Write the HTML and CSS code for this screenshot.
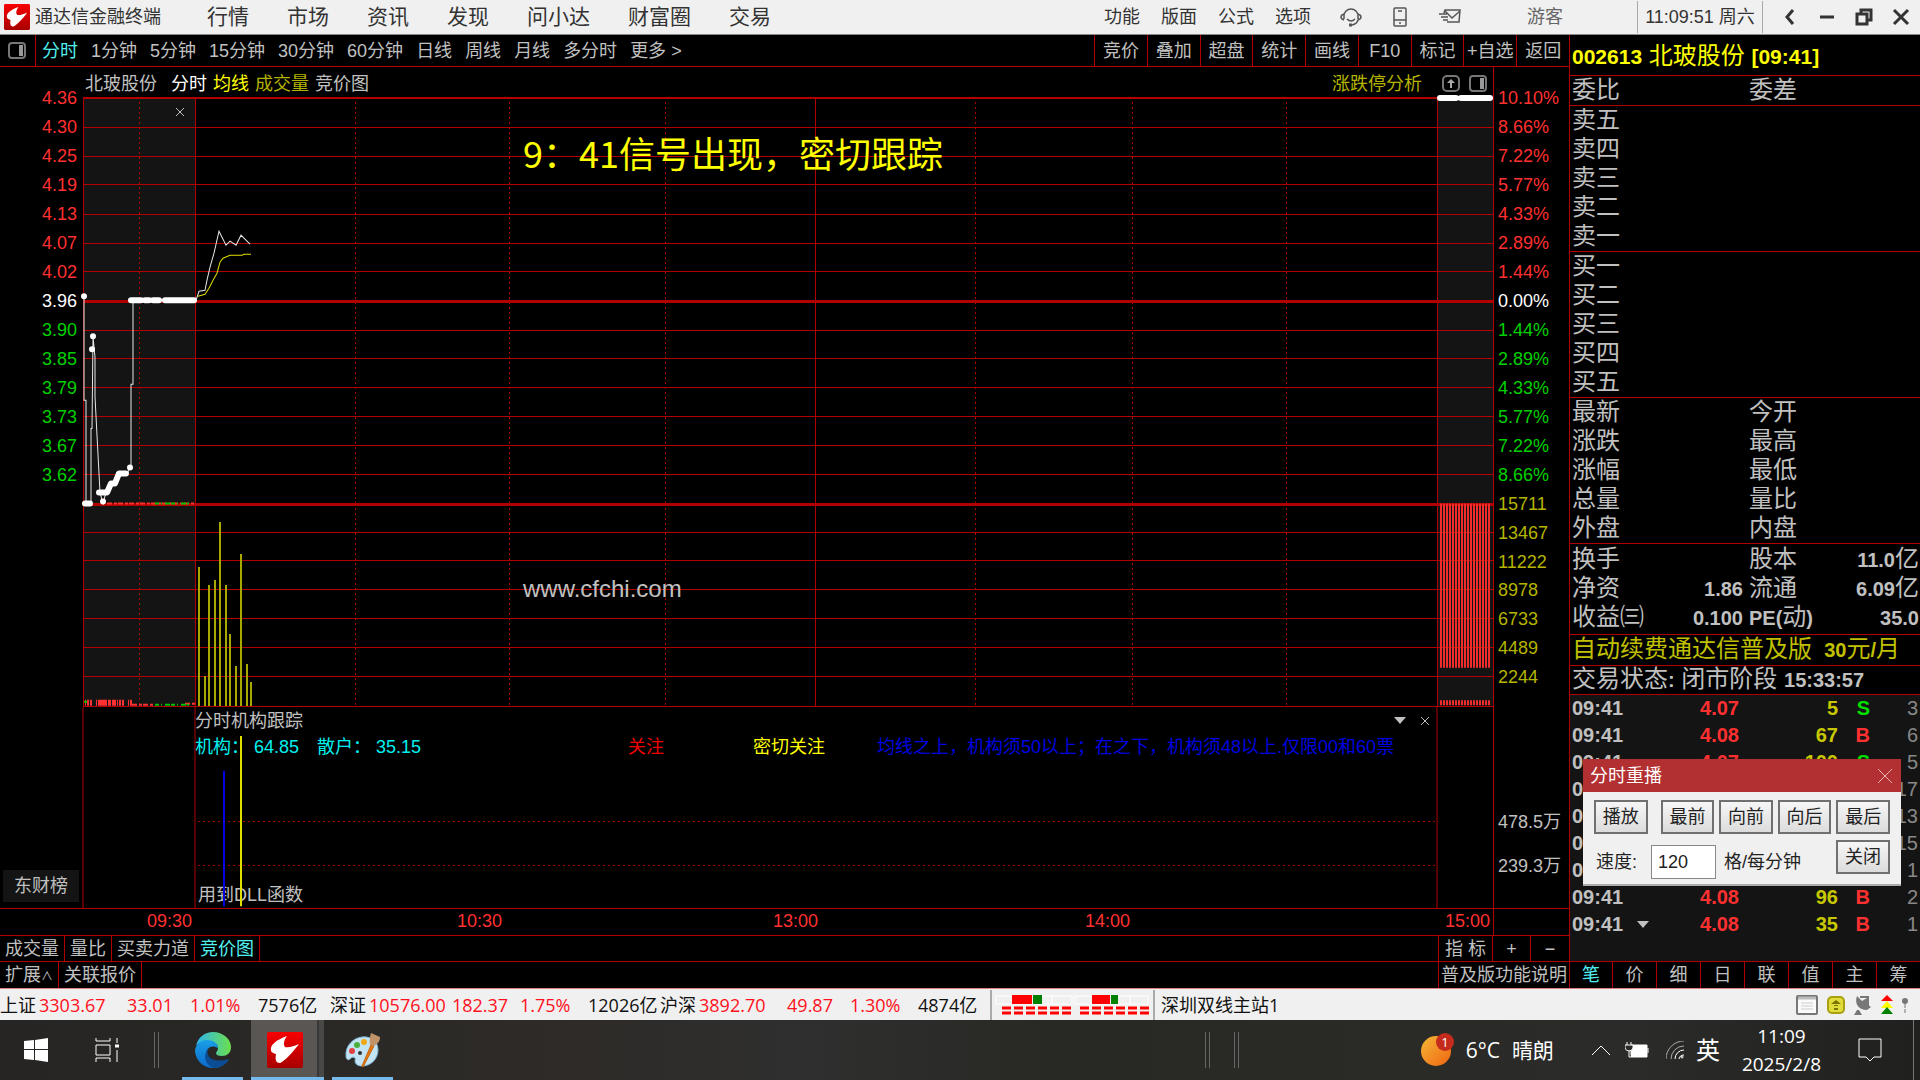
FILE: index.html
```html
<!DOCTYPE html>
<html lang="zh-CN">
<head>
  <meta charset="UTF-8">
  <title>通达信金融终端</title>
  <link rel="stylesheet" href="styles.css">
</head>
<body>

  <header class="titlebar">
    <svg class="logo" viewBox="0 0 36 36"><use href="#tdx"/></svg>
    <span class="app-name">通达信金融终端</span>
    <nav class="main-menu">
      <a href="#">行情</a><a href="#">市场</a><a href="#">资讯</a><a href="#">发现</a><a href="#">问小达</a><a href="#">财富圈</a><a href="#">交易</a>
    </nav>
    <nav class="tool-menu">
      <a href="#">功能</a><a href="#">版面</a><a href="#">公式</a><a href="#">选项</a>
    </nav>
    <div class="title-icons">
      <svg width="22" height="20" viewBox="0 0 22 20" fill="none" stroke="#555" stroke-width="1.5"><path d="M4 12V9a7 7 0 0 1 14 0v3M4 7q-3 1-3 3t3 3M18 7q3 1 3 3t-3 3q-1 4-6 5"/><path d="M7 12q4 4 8 0"/><path d="M9 18h3" stroke-width="3"/></svg>
      <svg width="14" height="20" viewBox="0 0 14 20" fill="none" stroke="#555" stroke-width="1.5"><rect x="1" y="1" width="12" height="18" rx="1"/><path d="M1 13h12M5 4h4M6 16h2"/></svg>
      <svg width="24" height="18" viewBox="0 0 24 18" fill="none" stroke="#555" stroke-width="1.5"><path d="M6 5l1-3h15l-1 12H9M7 3l7 7 8-7M1 6h8M3 9h7M5 12h5"/></svg>
    </div>
    <a class="guest" href="#">游客</a>
    <span class="clock">11:09:51 周六</span>
    <div class="window-btns">
      <button aria-label="后退"><svg width="18" height="18" viewBox="0 0 18 18"><path d="M12 2L6 9l6 7"/></svg></button>
      <button aria-label="最小化"><svg width="18" height="18" viewBox="0 0 18 18"><path d="M2 9h14"/></svg></button>
      <button aria-label="还原"><svg width="18" height="18" viewBox="0 0 18 18"><path d="M2 6h10v10H2zM6 6V2h10v10h-4"/></svg></button>
      <button aria-label="关闭窗口"><svg width="18" height="18" viewBox="0 0 18 18"><path d="M2 2l14 14M16 2L2 16"/></svg></button>
    </div>
  </header>

  <div class="workspace">
    <main class="chart-side">

      <div class="period-bar">
        <button class="panel-toggle" aria-label="侧栏"><svg width="18" height="17" viewBox="0 0 18 17"><use href="#panel"/></svg></button>
        <nav class="periods">
          <a class="active" href="#">分时</a><a href="#">1分钟</a><a href="#">5分钟</a><a href="#">15分钟</a><a href="#">30分钟</a><a href="#">60分钟</a><a href="#">日线</a><a href="#">周线</a><a href="#">月线</a><a href="#">多分时</a><a href="#">更多 &gt;</a>
        </nav>
        <div class="actions">
          <button>竞价</button><button>叠加</button><button>超盘</button><button>统计</button><button>画线</button><button>F10</button><button>标记</button><button>+自选</button><button>返回</button>
        </div>
      </div>

      <div class="chart">
        <div class="chart-head">
          <span class="stock">北玻股份</span>
          <span class="white">分时</span>
          <span class="yellow">均线</span>
          <span class="olive">成交量</span>
          <span>竞价图</span>
          <a class="limit olive" href="#">涨跌停分析</a>
          <svg width="18" height="17" viewBox="0 0 18 17"><rect x="1" y="1" width="16" height="15" rx="4" fill="none" stroke="#777" stroke-width="2"/><path d="M9 4l4 4h-3v5H8V8H5z" fill="#aaa"/></svg>
          <svg width="18" height="17" viewBox="0 0 18 17"><use href="#panel"/></svg>
        </div>

        <div class="axis price-axis">
          <span>4.36</span><span>4.30</span><span>4.25</span><span>4.19</span><span>4.13</span><span>4.07</span><span>4.02</span>
          <span class="white">3.96</span>
          <span class="green">3.90</span><span class="green">3.85</span><span class="green">3.79</span><span class="green">3.73</span><span class="green">3.67</span><span class="green">3.62</span>
        </div>

        <div class="plot">
          <svg viewBox="0 0 1410 607" preserveAspectRatio="none">
            <path class="shade" d="M0 0H112V607H0zM1354 0h56V607h-56z"/>
            <!-- grid -->
            <path class="grid" d="M0 0H1410M0 29H1410M0 58H1410M0 86H1410M0 116H1410M0 145H1410M0 173H1410M0 232H1410M0 260H1410M0 289H1410M0 318H1410M0 347H1410M0 376H1410M0 434H1410M0 462H1410M0 491H1410M0 520H1410M0 549H1410M0 578H1410M0 0V607M112 0V607M732 0V607M1354 0V607"/>
            <path class="grid thick" d="M0 203H1410M0 406H1410"/>
            <path class="grid dots" d="M56 4V607M272 4V607M426 4V607M582 4V607M892 4V607M1049 4V607M1203 4V607"/>
            <!-- call auction volume -->
            <path d="M2 604H49" stroke="#ff3030" stroke-width="6" stroke-dasharray="1 1 2 1 2 4 1 1 9 1 3 1 4 1"/>
            <path d="M49 606H70M102 605H112M24 405H112" stroke="#ff3030" stroke-width="2" stroke-dasharray="5 2 3 1"/>
            <path d="M72 606H106M72 405H106M1 405h4M1 603h3" stroke="#00c000" stroke-width="2" stroke-dasharray="4 2 1 3 5 1"/>
            <path d="M1357 487H1408" stroke="#f02c2c" stroke-width="164" stroke-dasharray="2 1"/>
            <path d="M1357 604H1408" stroke="#f02c2c" stroke-width="5" stroke-dasharray="2 1"/>
            <!-- volume -->
            <path class="vol" d="M116 468V607M122 577V607M126 486V607M132 481V607M137 423V607M143 486V607M147 535V607M153 567V607M158 455V607M164 565V607M168 583V607"/>
            <!-- price and average -->
            <path class="line" d="M1 198V302H3V404H8V330H9L10 238L12 259V298L14 337L16 375L17 394L20 405L23 394L27 385L32 385L36 375H44L47 369L48 367V286H50V202H113L116 193L122 192L124 182L127 169L131 155L136 133L143 147L147 143L153 147L158 137L167 146"/>
            <path class="line avg" d="M115 198L122 196L126 190L130 182L134 175L137 164L140 160L147 157H159L161 156H168"/>
            <path class="points" d="M1 198h0M9 251h0M10 238h0M2 405H7M16 394H24L28 385H32L36 375H43M47 369h0M20 403h0M48 202H58M62 202H66M70 202H76M82 202H111M1357 0H1373M1378 0H1407"/>
          </svg>
          <button class="close-auction" aria-label="关闭竞价"><svg width="10" height="10" viewBox="0 0 10 10"><use href="#cross"/></svg></button>
          <p class="note">9：41信号出现，密切跟踪</p>
          <p class="watermark">www.cfchi.com</p>
        </div>

        <div class="axis percent-axis">
          <span>10.10%</span><span>8.66%</span><span>7.22%</span><span>5.77%</span><span>4.33%</span><span>2.89%</span><span>1.44%</span>
          <span class="white">0.00%</span>
          <span class="green">1.44%</span><span class="green">2.89%</span><span class="green">4.33%</span><span class="green">5.77%</span><span class="green">7.22%</span><span class="green">8.66%</span>
          <span class="olive">15711</span><span class="olive">13467</span><span class="olive">11222</span><span class="olive">8978</span><span class="olive">6733</span><span class="olive">4489</span><span class="olive">2244</span>
        </div>

        <div class="rank"><button>东财榜</button></div>

        <div class="indicator">
          <svg viewBox="0 0 1410 202" preserveAspectRatio="none">
            <path class="grid" d="M0 0V202M112 0V202M1354 0V202"/>
            <path class="grid dots" d="M115 115H1354M115 159H1354"/>
          </svg>
          <div class="indicator-text">
            <div class="ind-title">
              <span>分时机构跟踪</span>
              <button aria-label="展开"><svg width="12" height="7" viewBox="0 0 12 7"><path d="M0 0h12L6 7z" fill="#c0c0c0"/></svg></button>
              <button aria-label="关闭指标"><svg width="10" height="10" viewBox="0 0 10 10"><use href="#cross"/></svg></button>
            </div>
            <div class="ind-values">
              <span>机构：</span><span>64.85</span><span>散户：</span><span>35.15</span>
              <span class="pure-red">关注</span><span class="yellow">密切关注</span>
              <span class="blue">均线之上，机构须50以上；在之下，机构须48以上.仅限00和60票</span>
            </div>
            <div class="ind-foot">用到DLL函数</div>
          </div>
          <svg class="signals" viewBox="0 0 1410 202" preserveAspectRatio="none">
            <path d="M141 64V200" stroke="#0000e0" stroke-width="2"/>
            <path d="M158 29V200" stroke="#e0e000" stroke-width="2"/>
          </svg>
        </div>

        <div class="flow-axis"><span>478.5万</span><span>239.3万</span></div>

        <div class="time-axis"><span>09:30</span><span>10:30</span><span>13:00</span><span>14:00</span><span>15:00</span></div>
        <div class="time-end"></div>
      </div>

      <div class="tab-row">
        <button>成交量</button><button>量比</button><button>买卖力道</button><button class="active">竞价图</button>
        <div class="tab-right"><button class="w-a">指 标</button><button class="w-b">+</button><button class="w-b">−</button></div>
      </div>
      <div class="tab-row">
        <button>扩展<small>∧</small></button><button>关联报价</button>
        <div class="tab-right"><button class="w-all">普及版功能说明</button></div>
      </div>
    </main>

    <aside class="quote-side">
      <h1><b>002613</b> 北玻股份 <b>[09:41]</b></h1>
      <div class="pairs"><span>委比</span><span></span><span>委差</span><span></span></div>
      <div class="pairs">
        <span>卖五</span><span></span><span></span><span></span>
        <span>卖四</span><span></span><span></span><span></span>
        <span>卖三</span><span></span><span></span><span></span>
        <span>卖二</span><span></span><span></span><span></span>
        <span>卖一</span><span></span><span></span><span></span>
      </div>
      <div class="pairs">
        <span>买一</span><span></span><span></span><span></span>
        <span>买二</span><span></span><span></span><span></span>
        <span>买三</span><span></span><span></span><span></span>
        <span>买四</span><span></span><span></span><span></span>
        <span>买五</span><span></span><span></span><span></span>
      </div>
      <div class="pairs">
        <span>最新</span><span></span><span>今开</span><span></span>
        <span>涨跌</span><span></span><span>最高</span><span></span>
        <span>涨幅</span><span></span><span>最低</span><span></span>
        <span>总量</span><span></span><span>量比</span><span></span>
        <span>外盘</span><span></span><span>内盘</span><span></span>
      </div>
      <div class="pairs roomy">
        <span>换手</span><span></span><span>股本</span><span><b>11.0</b>亿</span>
        <span>净资</span><span><b>1.86</b></span><span>流通</span><span><b>6.09</b>亿</span>
        <span>收益㈢</span><span><b>0.100</b></span><span><b>PE(</b>动<b>)</b></span><span><b>35.0</b></span>
      </div>
      <a class="renew" href="#"><span>自动续费通达信普及版</span><span><b>30</b>元<b>/</b>月</span></a>
      <div class="state">交易状态<b>:</b> 闭市阶段 <b>15:33:57</b></div>

      <div class="ticks">
        <table>
          <tr><td>09:41</td><td>4.07</td><td>5</td><td class="sell">S</td><td>3</td></tr>
          <tr><td>09:41</td><td>4.08</td><td>67</td><td>B</td><td>6</td></tr>
          <tr><td>09:41</td><td>4.07</td><td>100</td><td class="sell">S</td><td>5</td></tr>
          <tr><td>09:41</td><td>4.07</td><td>210</td><td>B</td><td>17</td></tr>
          <tr><td>09:41</td><td>4.08</td><td>85</td><td>B</td><td>13</td></tr>
          <tr><td>09:41</td><td>4.07</td><td>140</td><td class="sell">S</td><td>15</td></tr>
          <tr><td>09:41</td><td>4.08</td><td>20</td><td>B</td><td>1</td></tr>
          <tr><td>09:41</td><td>4.08</td><td>96</td><td>B</td><td>2</td></tr>
          <tr><td>09:41 <svg width="12" height="7" viewBox="0 0 12 7"><path d="M0 0h12L6 7z" fill="#c0c0c0"/></svg></td><td>4.08</td><td>35</td><td>B</td><td>1</td></tr>
        </table>

        <form class="replay">
          <div class="replay-title">分时重播
            <button type="button" aria-label="关闭对话框"><svg width="14" height="14" viewBox="0 0 14 14"><path d="M0 0l14 14M14 0L0 14" stroke="#e8b4b4"/></svg></button>
          </div>
          <div class="replay-row">
            <button type="button" class="play">播放</button><button type="button">最前</button><button type="button">向前</button><button type="button">向后</button><button type="button">最后</button>
          </div>
          <div class="replay-row speed">
            <label for="speed">速度:</label>
            <input id="speed" type="text" value="120">
            <span>格/每分钟</span>
            <button type="button">关闭</button>
          </div>
        </form>
      </div>

      <div class="quote-tabs">
        <button class="active">笔</button><button>价</button><button>细</button><button>日</button><button>联</button><button>值</button><button>主</button><button>筹</button>
      </div>
    </aside>
  </div>

  <div class="statusbar">
    <div class="index"><span>上证</span><span>3303.67</span><span>33.01</span><span>1.01%</span><span>7576亿</span></div>
    <div class="index"><span>深证</span><span>10576.00</span><span>182.37</span><span>1.75%</span><span>12026亿</span></div>
    <div class="index"><span>沪深</span><span>3892.70</span><span>49.87</span><span>1.30%</span><span>4874亿</span></div>
    <div class="heat">
      <svg width="154" height="22" viewBox="0 0 154 22">
        <path d="M1 2h76v8H1zM80 2h73v8H80zM57 2v8M135 2v8" fill="none" stroke="#fff"/>
        <path d="M17 1h20v9H17zM97 1h18v9H97z" fill="#f00"/>
        <path d="M38 1h9v9H38zM116 1h7v9H116z" fill="#008000"/>
        <path d="M7 14H76M7 19H76M85 14H154M85 19H154" stroke="#f00" stroke-width="3" stroke-dasharray="9 3"/>
      </svg>
    </div>
    <span class="host">深圳双线主站1</span>
    <div class="status-icons">
      <svg width="22" height="20" viewBox="0 0 22 20"><rect x="1" y="1" width="20" height="18" rx="1" fill="#fafafa" stroke="#777" stroke-width="2"/><path d="M2 3h18" stroke="#bbb" stroke-width="3"/><path d="M5 8h12M5 11h12M5 14h12" stroke="#ccc"/></svg>
      <svg width="18" height="18" viewBox="0 0 18 18"><rect x="1" y="1" width="16" height="16" rx="4" fill="#e0dc3c" stroke="#a8a010" stroke-width="2"/><path d="M9 4l5 4H4zM7 9h4v1H7zM7 12h4v2H7z" fill="#7a7400"/></svg>
      <svg width="18" height="20" viewBox="0 0 18 20" fill="#777"><path d="M3 1C0 9 5 15 13 15l4-3-4-3V3L8 6zM0 20l3-5h2l3 5z"/><path d="M6 2h8v9" fill="none" stroke="#777" stroke-width="2"/></svg>
      <svg width="12" height="20" viewBox="0 0 12 20"><path d="M6 0l6 6H0z" fill="#f00"/><path d="M6 6l6 7H0z" fill="#ff0"/><path d="M6 12l6 7H0z" fill="#008000"/></svg>
      <svg width="6" height="16" viewBox="0 0 6 16"><circle cx="3" cy="4" r="3" fill="#777"/><path d="M3 6v10" stroke="#777" stroke-dasharray="5 1"/></svg>
    </div>
  </div>

  <footer class="taskbar">
    <button class="task start" aria-label="开始"><svg width="24" height="24" viewBox="0 0 24 24" fill="#fff"><path d="M0 3l10-1v9H0zM11 2l13-2v11H11zM0 12h10v10L0 21zM11 12h13v12l-13-2z"/></svg></button>
    <button class="task view" aria-label="任务视图"><svg width="26" height="24" viewBox="0 0 26 24" fill="none" stroke="#fff"><path d="M1 0v3h14V0M1 24v-4h14v4M1 7h14v10H1zM22 0v5M22 12v12"/><path d="M20 8h4" stroke-width="3"/></svg></button>
    <i class="grip"></i>
    <button class="task open edge" aria-label="Edge">
      <svg width="36" height="36" viewBox="0 0 36 36">
        <defs>
          <linearGradient id="e1" x1="0" x2="1"><stop offset="0" stop-color="#2fb4ee"/><stop offset="1" stop-color="#6be04c"/></linearGradient>
          <linearGradient id="e2" x1="0" x2="0" y1="0" y2="1"><stop offset="0" stop-color="#1ba0e8"/><stop offset="1" stop-color="#0b68c8"/></linearGradient>
        </defs>
        <path d="M1 14C3 5 10 0 18 0c10 0 18 7 18 15 0 6-4 9-9 9-4 0-6-1-6-3 0-1 2-2 2-5 0-4-4-7-9-7C7 9 2 12 1 14z" fill="url(#e1)"/>
        <path d="M0 18C1 12 6 8 12 8c7 0 11 4 11 8-6-4-12 0-12 6 0 7 6 12 14 13-3 1-5 1-7 1C8 36 0 28 0 18z" fill="url(#e2)"/>
        <path d="M14 16c-5 8 4 16 19 11 1 0 1 1 0 2-4 5-9 7-14 7-9-3-12-13-5-20z" fill="#0c4c94"/>
      </svg>
    </button>
    <button class="task open current" aria-label="通达信">
      <svg width="36" height="36" viewBox="0 0 36 36">
        <defs>
          <linearGradient id="r1" x1="0" x2="0" y1="0" y2="1"><stop offset="0" stop-color="#f80000"/><stop offset="1" stop-color="#a80000"/></linearGradient>
          <g id="tdx"><rect width="36" height="36" rx="2" fill="url(#r1)"/><path d="M20 4C9 8 3 13 4 18c0 3 3 3 5 4-1 6 0 9 4 9 5-2 13-11 19-19-5 2-10 4-14 3-2-3-1-7 2-11z" fill="#fff"/></g>
          <g id="panel"><rect x="1" y="1" width="16" height="15" rx="3" fill="none" stroke="#777" stroke-width="2"/><path d="M11 3h4v11h-4z" fill="#999"/></g>
          <path id="cross" d="M1 1l8 8M9 1L1 9" stroke="#c0c0c0" fill="none"/>
        </defs>
        <use href="#tdx"/>
      </svg>
    </button>
    <button class="task open paint" aria-label="画图">
      <svg width="36" height="36" viewBox="0 0 36 36">
        <path d="M17 5C8 6 0 14 1 24c0 4 3 5 5 2 3-2 5 0 4 3 0 3 3 5 7 5 9 0 16-7 16-16C33 9 26 4 17 5z" fill="#c3e4f4" stroke="#7fb4d0"/>
        <circle cx="7" cy="19" r="3" fill="#e04040"/><circle cx="12" cy="13" r="3" fill="#48b040"/><circle cx="19" cy="10" r="3" fill="#f0a818"/><circle cx="15" cy="21" r="2" fill="#333"/>
        <path d="M26 13l-9 21 1 1 11-21z" fill="#e07818" stroke="#c86408"/><path d="M26 1l9 4c0 5-3 7-6 9l-4-1c-1-4 0-8 1-12z" fill="#c09468"/>
      </svg>
    </button>
    <div class="grips"><i class="grip"></i><i class="grip"></i></div>
    <div class="tray">
      <svg class="weather" width="34" height="34" viewBox="0 0 34 34">
        <defs><linearGradient id="sun" x1="0" x2="1" y1="0" y2="1"><stop offset="0" stop-color="#f4b838"/><stop offset="1" stop-color="#f06410"/></linearGradient></defs>
        <circle cx="15" cy="18" r="15" fill="url(#sun)"/><circle cx="24" cy="9" r="9" fill="#c42b1c"/>
        <text x="24" y="14" text-anchor="middle" font-size="13" fill="#fff">1</text>
      </svg>
      <span class="temp">6°C</span><span class="sky">晴朗</span>
      <svg class="up" width="18" height="10" viewBox="0 0 18 10" fill="none" stroke="#fff"><path d="M0 10l9-9 9 9"/></svg>
      <svg class="battery" width="24" height="16" viewBox="0 0 24 16"><path d="M6 3h16v12H6zM23 6v5" fill="#fff" stroke="#fff"/><path d="M2 0v3M6 0v3M0 3h8v3q-1 3-4 3t-4-3zM4 9v6h2" fill="#2b2b29" stroke="#fff"/></svg>
      <svg class="wifi" width="18" height="18" viewBox="0 0 18 18" fill="none" stroke="#fff"><path d="M0 18A18 18 0 0 1 18 0M5 18A13 13 0 0 1 18 5" stroke="#aaa"/><path d="M9 18a9 9 0 0 1 9-9M13 18a5 5 0 0 1 5-4"/><circle cx="16" cy="16" r="1"/></svg>
      <span class="ime">英</span>
      <div class="date"><span>11:09</span><span>2025/2/8</span></div>
      <svg class="notice" width="24" height="24" viewBox="0 0 24 24" fill="none" stroke="#fff"><path d="M1 1h22v18h-7l-4 4-4-4H1z"/></svg>
    </div>
  </footer>

</body>
</html>
```
FILE: styles.css
```css
* {
  box-sizing: border-box;
}

body {
  margin: 0;
  min-height: 100vh;
  display: flex;
  flex-direction: column;
  background: #000;
  color: #c0c0c0;
  font-family: "Liberation Sans", "Noto Sans CJK SC", sans-serif;
  font-size: 18px;
  line-height: 26px;
}

a {
  color: inherit;
  text-decoration: none;
}

button {
  font: inherit;
  color: inherit;
  background: none;
  border: none;
  padding: 0;
  white-space: nowrap;
}

p {
  margin: 0;
}

svg {
  display: block;
  flex-shrink: 0;
}

.white { color: #fff; }
.yellow { color: #ffff00; }
.olive { color: #b4b400; }
.green { color: #00d000; }
.blue { color: #0000e0; }
.pure-red { color: #f00000; }
.active { color: #50f0f0; }

/* title bar */
.titlebar {
  display: flex;
  align-items: center;
  height: 35px;
  padding-left: 4px;
  background: #f0f0f0;
  border-bottom: 1px solid #888;
  color: #333;
  white-space: nowrap;
}

.logo {
  width: 26px;
  height: 26px;
  margin-right: 5px;
}

.main-menu {
  display: flex;
  gap: 38px;
  margin-left: 46px;
  font-size: 21px;
}

.tool-menu {
  display: flex;
  gap: 21px;
  margin-left: auto;
}

.title-icons {
  display: flex;
  align-items: center;
  gap: 31px;
  margin-left: 29px;
}

.guest {
  margin-left: 65px;
  color: #666;
}

.clock {
  margin-left: 74px;
  width: 126px;
  line-height: 32px;
  text-align: center;
  border-left: 1px solid #aaa;
  border-right: 1px solid #aaa;
}

.window-btns {
  display: flex;
  gap: 19px;
  padding: 0 10px 0 18px;
}

.window-btns path {
  fill: none;
  stroke: #333;
  stroke-width: 3;
}

/* work area */
.workspace {
  flex: 1;
  display: flex;
}

.chart-side {
  flex: 1;
  min-width: 0;
  display: flex;
  flex-direction: column;
}

.period-bar {
  display: flex;
  height: 32px;
  border-bottom: 1px solid #b00000;
  line-height: 33px;
}

.panel-toggle {
  width: 36px;
  padding-left: 8px;
  border-right: 1px solid #b00000;
}

.periods {
  display: flex;
  gap: 13px;
  margin-left: 6px;
  white-space: nowrap;
}

.actions {
  display: flex;
  width: 475px;
  margin-left: auto;
}

.actions button {
  flex: 1;
  border-left: 1px solid #b00000;
}

/* chart */
.chart {
  flex: 1;
  display: grid;
  grid-template-columns: 83px 1fr 76px;
  grid-template-rows: 31px 607fr 202fr 27px;
}

.chart-head {
  grid-column: 1 / 3;
  display: flex;
  align-items: center;
  gap: 6px;
  padding: 2px 6px 0 85px;
}

.chart-head .stock {
  margin-right: 8px;
}

.chart-head .limit {
  margin-left: auto;
  margin-right: 14px;
}

.chart-head svg + svg {
  margin-left: 3px;
}

.axis {
  display: grid;
  grid-template-rows: repeat(21, 1fr);
  align-items: center;
  margin-top: -14px;
  margin-bottom: 14px;
  color: #ff3030;
}

.axis .white { color: #fff; }
.axis .green { color: #00d000; }
.axis .olive { color: #b4b400; }

.price-axis {
  grid-column: 1;
  padding-right: 6px;
  text-align: right;
}

.percent-axis {
  grid-column: 3;
  grid-row: 1 / 3;
  margin: 0;
  padding: 17px 0 14px 4px;
  border-left: 1px solid #b00000;
}

.plot,
.indicator {
  position: relative;
  grid-column: 2;
  min-height: 0;
}

.plot > svg,
.indicator > svg {
  position: absolute;
  inset: 0;
  width: 100%;
  height: 100%;
  overflow: visible;
}

.shade {
  fill: #141414;
}

.grid {
  fill: none;
  stroke: #b00000;
  shape-rendering: crispEdges;
}

.thick {
  stroke-width: 3;
}

.dots {
  stroke-dasharray: 2 3;
}

.vol {
  stroke: #a8a800;
  stroke-width: 2;
  shape-rendering: crispEdges;
}

.line {
  fill: none;
  stroke: #e8e8e8;
  stroke-width: 1;
}

.avg {
  stroke: #e0e000;
}

.points {
  fill: none;
  stroke: #fff;
  stroke-width: 6;
  stroke-linecap: round;
  stroke-linejoin: round;
}

.close-auction {
  position: absolute;
  left: 92px;
  top: 9px;
}

.note,
.watermark {
  position: absolute;
  left: 440px;
}

.note {
  top: 34px;
  color: #ffff00;
  font-family: "Noto Sans CJK SC", sans-serif;
  font-size: 36px;
  line-height: 40px;
}

.watermark {
  top: 478px;
  font-size: 24px;
}

.rank {
  display: flex;
  align-items: flex-end;
  padding: 0 3px 6px;
}

.rank button {
  width: 76px;
  height: 32px;
  background: #141414;
}

.indicator {
  border-top: 1px solid #b00000;
}

.indicator-text {
  display: flex;
  flex-direction: column;
  height: 100%;
  padding: 1px 63px 0 112px;
  white-space: nowrap;
}

.ind-title {
  display: flex;
  align-items: center;
  gap: 14px;
}

.ind-title span {
  margin-right: auto;
}

.ind-values {
  display: flex;
  color: #00f0f0;
}

.ind-values span:nth-child(1),
.ind-values span:nth-child(3) {
  width: 59px;
}

.ind-values span:nth-child(2) {
  width: 63px;
}

.ind-values .pure-red {
  margin-left: 207px;
  color: #f00000;
}

.ind-values .yellow {
  margin-left: 89px;
  color: #ffff00;
}

.ind-values .blue {
  margin-left: 52px;
  color: #0000e0;
}

.ind-foot {
  margin-top: auto;
  padding-left: 3px;
}

.flow-axis {
  grid-column: 3;
  display: flex;
  flex-direction: column;
  justify-content: flex-end;
  gap: 18px;
  padding: 0 0 29px 4px;
  border-left: 1px solid #b00000;
}

.time-axis {
  grid-column: 1 / 3;
  display: grid;
  grid-template-columns: 310fr 316fr 312fr 360fr 48px;
  padding-left: 147px;
  border-top: 1px solid #b00000;
  line-height: 24px;
  color: #ff3030;
}

.time-end {
  border-top: 1px solid #b00000;
  border-left: 1px solid #b00000;
}

.tab-row {
  display: flex;
  height: 26px;
  border-top: 1px solid #b00000;
}

.tab-row + .tab-row {
  height: 27px;
}

.tab-row button {
  padding: 0 5px;
  border-right: 1px solid #b00000;
}

.tab-row small {
  font-size: 12px;
}

.tab-right {
  display: flex;
  margin-left: auto;
  border-left: 1px solid #b00000;
}

.tab-right button:last-child {
  border-right: none;
}

.tab-right .w-a { width: 54px; }
.tab-right .w-b { width: 38px; }
.tab-right .w-all { width: 130px; padding: 0 2px; }

/* quote panel */
.quote-side {
  width: 351px;
  display: flex;
  flex-direction: column;
  border-left: 1px solid #b00000;
  font-size: 24px;
  line-height: 29px;
  white-space: nowrap;
}

.quote-side b {
  font-size: 20px;
  line-height: 1;
}

h1 {
  height: 40px;
  margin: 0;
  padding: 0 2px;
  font-size: 24px;
  font-weight: normal;
  line-height: 41px;
  color: #ffff00;
}

.quote-side h1 b {
  font-size: 21px;
}

.pairs {
  display: grid;
  grid-template-columns: 72px 97px 72px 1fr;
  grid-auto-rows: 29px;
  column-gap: 2px;
  padding: 0 1px 0 2px;
  border-top: 1px solid #b00000;
  line-height: 28px;
}

.pairs span:nth-child(even) {
  text-align: right;
}

.pairs span:nth-child(4n+3) {
  padding-left: 4px;
}

.roomy {
  padding-top: 1px;
  padding-bottom: 2px;
}

.renew {
  display: flex;
  justify-content: space-between;
  height: 31px;
  padding: 0 20px 0 2px;
  border-top: 1px solid #b00000;
  line-height: 28px;
  color: #c0c000;
}

.state {
  height: 29px;
  padding: 0 2px;
  border-top: 1px solid #b00000;
  line-height: 26px;
}

.ticks {
  position: relative;
  flex: 1;
  background: #141414;
  border-top: 1px solid #b00000;
}

.ticks table {
  width: 100%;
  border-collapse: collapse;
  font-size: 20px;
  font-weight: bold;
  line-height: 27px;
}

.ticks td {
  padding: 0;
  text-align: right;
  color: #ff3030;
}

.ticks td:first-child {
  width: 86px;
  padding-left: 2px;
  text-align: left;
  color: #c0c0c0;
}

.ticks td:nth-child(2) { width: 83px; }
.ticks td:nth-child(3) { width: 99px; color: #c8c800; }
.ticks td:nth-child(4) { width: 32px; }
.ticks td:last-child { padding-right: 2px; color: #888; font-weight: normal; }
.ticks .sell { color: #00e000; }

.ticks td svg {
  display: inline-block;
  margin: 0 0 3px 8px;
}

.quote-tabs {
  display: flex;
  height: 27px;
  border-top: 1px solid #b00000;
  font-size: 18px;
  line-height: 26px;
}

.quote-tabs button {
  flex: 1;
}

.quote-tabs button:first-child {
  flex: 0 0 42px;
}

.quote-tabs button + button {
  border-left: 1px solid #b00000;
}

/* replay dialog */
.replay {
  position: absolute;
  top: 64px;
  right: 19px;
  width: 318px;
  padding-bottom: 5px;
  background: #f0f0f0;
  border-bottom: 2px solid #aaa;
  color: #222;
  font-size: 18px;
  line-height: 26px;
}

.replay-title {
  display: flex;
  justify-content: space-between;
  align-items: center;
  height: 33px;
  padding: 0 9px 0 7px;
  background: #b23031;
  color: #fff;
}

.replay-row {
  display: flex;
  gap: 5px;
  padding: 8px 11px 0;
}

.replay-row button {
  width: 54px;
  height: 34px;
  background: linear-gradient(#f6f6f6, #dcdcdc);
  border: 2px solid #707070;
}

.replay-row .play {
  margin-right: 8px;
}

.speed {
  align-items: flex-end;
  gap: 8px;
  height: 45px;
  padding-top: 6px;
  line-height: 34px;
}

.speed label {
  width: 49px;
  padding-left: 2px;
}

.speed input {
  width: 65px;
  height: 34px;
  padding: 0 6px;
  border: 1px solid #888;
  background: #fff;
  color: #222;
  font: inherit;
}

.speed button {
  align-self: flex-start;
  margin-left: auto;
  line-height: 28px;
}

/* index status bar */
.statusbar {
  display: flex;
  align-items: center;
  height: 32px;
  padding-top: 1px;
  background: #f0f0f0;
  border-top: 1px solid #e08080;
  color: #111;
  font-family: "Open Sans", "Noto Sans CJK SC", sans-serif;
  line-height: 28px;
  white-space: nowrap;
}

.index {
  display: grid;
  grid-template-columns: 39px 79px 64px 76px 72px;
}

.index span:nth-child(n+2):nth-child(-n+4) {
  color: #ff1020;
}

.index span:nth-child(3) {
  text-align: center;
}

.index span:nth-child(4) {
  padding-left: 8px;
}

.heat {
  padding: 4px 4px 4px 3px;
  border-left: 2px solid #aaa;
  border-right: 2px solid #aaa;
}

.host {
  margin-left: 6px;
}

.status-icons {
  display: flex;
  align-items: center;
  gap: 9px;
  margin-left: auto;
  padding-right: 12px;
}

/* windows taskbar */
.taskbar {
  display: flex;
  height: 60px;
  padding-right: 6px;
  background: linear-gradient(90deg, #262523, #2e2b28 30%, #2f2f2f 42%, #282824 55%, #2b2b29 85%, #20201e);
  color: #fff;
  font-family: "Open Sans", "Noto Sans CJK SC", sans-serif;
  white-space: nowrap;
}

.task {
  display: flex;
  align-items: center;
  justify-content: center;
  width: 72px;
}

.task.open {
  width: 61px;
  border-top: 3px solid transparent;
  border-bottom: 3px solid #76b9ed;
}

.grip {
  width: 5px;
  height: 36px;
  margin: 12px 0 0 10px;
  border-left: 1px solid #666;
  border-right: 1px solid #666;
}

.task.edge {
  margin-left: 23px;
}

.task.current {
  width: 73px;
  margin: 0 8px;
  padding-right: 6px;
  background: linear-gradient(90deg, #5a5654 66px, #383838 66px, #383838 68px, #4a4846 68px);
}

.grips {
  display: flex;
  gap: 14px;
  margin-left: auto;
}

.tray {
  display: flex;
  align-items: center;
  width: 675px;
  padding-right: 31px;
  border-right: 1px solid #777;
}

.weather {
  margin-left: auto;
}

.temp,
.sky {
  font-size: 21px;
}

.temp { margin-left: 11px; }
.sky { margin-left: 12px; }
.up { margin-left: 38px; }
.battery { margin-left: 15px; }
.wifi { margin-left: 17px; }

.ime {
  margin-left: 12px;
  font-size: 24px;
}

.date {
  display: flex;
  flex-direction: column;
  align-items: center;
  margin-left: 22px;
  font-size: 19px;
  line-height: 28px;
}

.notice {
  margin-left: 37px;
}
```
